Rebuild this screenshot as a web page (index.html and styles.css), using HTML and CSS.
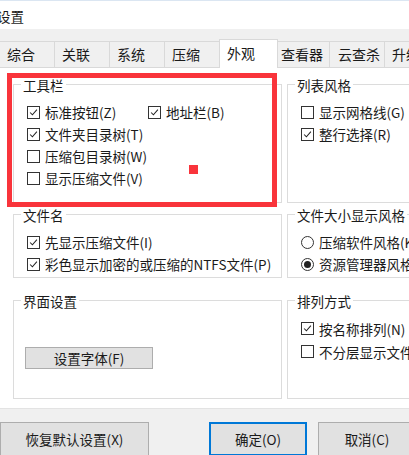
FILE: index.html
```html
<!DOCTYPE html>
<html lang="zh-CN">
<head>
    <meta charset="UTF-8">
    <title>设置</title>
    <link rel="stylesheet" href="styles.css">
</head>
<body>
    <div class="window">
        <div class="titlebar">设置</div>

        <div class="tabstrip">
            <div class="tab">综合</div>
            <div class="tab">关联</div>
            <div class="tab">系统</div>
            <div class="tab">压缩</div>
            <div class="tab active">外观</div>
            <div class="tab tab-3 tab-a">查看器</div>
            <div class="tab tab-3 tab-b">云查杀</div>
            <div class="tab">升级</div>
        </div>

        <div class="panel">
            <div class="band band-1">
                <div class="group">
                    <div class="group-title">工具栏</div>
                    <div class="rows">
                        <div class="row">
                            <div class="opt opt-wide"><span class="box on"><svg viewBox="0 0 13 13"><polyline points="2.5,6.5 5.2,9.2 10.5,3.2"/></svg></span>标准按钮(Z)</div>
                            <div class="opt"><span class="box on"><svg viewBox="0 0 13 13"><polyline points="2.5,6.5 5.2,9.2 10.5,3.2"/></svg></span>地址栏(B)</div>
                        </div>
                        <div class="row">
                            <div class="opt"><span class="box on"><svg viewBox="0 0 13 13"><polyline points="2.5,6.5 5.2,9.2 10.5,3.2"/></svg></span>文件夹目录树(T)</div>
                        </div>
                        <div class="row">
                            <div class="opt"><span class="box"></span>压缩包目录树(W)</div>
                        </div>
                        <div class="row">
                            <div class="opt"><span class="box"></span>显示压缩文件(V)</div>
                        </div>
                    </div>
                </div>
                <div class="group">
                    <div class="group-title">列表风格</div>
                    <div class="rows">
                        <div class="row">
                            <div class="opt"><span class="box"></span>显示网格线(G)</div>
                        </div>
                        <div class="row">
                            <div class="opt"><span class="box on"><svg viewBox="0 0 13 13"><polyline points="2.5,6.5 5.2,9.2 10.5,3.2"/></svg></span>整行选择(R)</div>
                        </div>
                    </div>
                </div>
            </div>

            <div class="band band-2">
                <div class="group">
                    <div class="group-title">文件名</div>
                    <div class="rows">
                        <div class="row">
                            <div class="opt"><span class="box on"><svg viewBox="0 0 13 13"><polyline points="2.5,6.5 5.2,9.2 10.5,3.2"/></svg></span>先显示压缩文件(I)</div>
                        </div>
                        <div class="row">
                            <div class="opt"><span class="box on"><svg viewBox="0 0 13 13"><polyline points="2.5,6.5 5.2,9.2 10.5,3.2"/></svg></span>彩色显示加密的或压缩的NTFS文件(P)</div>
                        </div>
                    </div>
                </div>
                <div class="group">
                    <div class="group-title">文件大小显示风格</div>
                    <div class="rows">
                        <div class="row">
                            <div class="opt"><span class="radio"></span>压缩软件风格(K)</div>
                        </div>
                        <div class="row">
                            <div class="opt"><span class="radio on"></span>资源管理器风格(E)</div>
                        </div>
                    </div>
                </div>
            </div>

            <div class="band band-3">
                <div class="group">
                    <div class="group-title">界面设置</div>
                    <button class="btn font-btn">设置字体(F)</button>
                </div>
                <div class="group">
                    <div class="group-title">排列方式</div>
                    <div class="rows rows-loose">
                        <div class="row">
                            <div class="opt"><span class="box on"><svg viewBox="0 0 13 13"><polyline points="2.5,6.5 5.2,9.2 10.5,3.2"/></svg></span>按名称排列(N)</div>
                        </div>
                        <div class="row">
                            <div class="opt"><span class="box"></span>不分层显示文件(L)</div>
                        </div>
                    </div>
                </div>
            </div>
        </div>

        <div class="footer">
            <button class="btn btn-reset">恢复默认设置(X)</button>
            <button class="btn btn-ok">确定(O)</button>
            <button class="btn btn-cancel">取消(C)</button>
        </div>

        <!-- red annotation drawn over the screenshot -->
        <div class="mark-box"></div>
        <div class="mark-dot"></div>
    </div>
</body>
</html>
```

FILE: styles.css
```css
* {
    box-sizing: border-box;
}

body {
    margin: 0;
    width: 409px;
    height: 455px;
    overflow: hidden;
    background: #f0f0f0;
    font-family: "Noto Sans CJK SC", "Noto Sans", sans-serif;
    font-size: 13.5px;
    color: #1a1a1a;
}

.window {
    position: relative;
    width: 409px;
    height: 455px;
    overflow: hidden;
}

.titlebar {
    height: 29px;
    line-height: 30px;
    background: #fff;
    border-top: 1px solid #dbe6f2;
    text-indent: -3px;
}

/* tabs */
.tabstrip {
    display: flex;
    align-items: flex-end;
    height: 38px;
    white-space: nowrap;
}

.tab {
    flex: none;
    width: 55px;
    height: 26px;
    line-height: 25px;
    padding-left: 7px;
    font-size: 14px;
    background: #f0f0f0;
    border-top: 1px solid #d9d9d9;
    border-right: 1px solid #d9d9d9;
}

.tab.active {
    position: relative;
    z-index: 1;
    width: 59px;
    height: 29px;
    line-height: 27px;
    margin-left: -1px;
    margin-right: -1px;
    margin-bottom: -1px;
    background: #fff;
    border-left: 1px solid #d9d9d9;
}

.tab-a {
    width: 53px;
    padding-left: 4px;
}

.tab-b {
    padding-left: 8px;
}

/* content panel */
.panel {
    height: 342px;
    background: #fff;
    border-top: 1px solid #d9d9d9;
    border-bottom: 1px solid #e3e3e3;
    padding: 16px 0 0 13px;
}

.band {
    display: grid;
    grid-template-columns: 269px 140px;
    column-gap: 5px;
}

.band-1 {
    height: 119px;
}

.band-2 {
    height: 64px;
    margin-top: 11px;
}

.band-3 {
    height: 99px;
    margin-top: 22px;
}

.group {
    border: 1px solid #dcdcdc;
    white-space: nowrap;
}

.group-title {
    display: block;
    width: max-content;
    height: 16px;
    line-height: 16px;
    margin: -8px 0 0 7px;
    padding: 0 2px;
    background: #fff;
}

.rows {
    margin-top: 8px;
    padding-left: 13px;
}

.row {
    display: flex;
    height: 22px;
    align-items: center;
}

.rows-loose .row {
    height: 23px;
}

.opt {
    display: flex;
    align-items: center;
    gap: 5px;
}

.opt-wide {
    width: 121px;
}

.box {
    flex: none;
    width: 13px;
    height: 13px;
    border: 1px solid #333;
    background: #fff;
}

.box svg {
    display: block;
    width: 11px;
    height: 11px;
}

.box polyline {
    fill: none;
    stroke: #222;
    stroke-width: 1.2;
}

.radio {
    flex: none;
    width: 13px;
    height: 13px;
    border: 1px solid #333;
    border-radius: 50%;
    background: #fff;
    display: flex;
    align-items: center;
    justify-content: center;
}

.radio.on::after {
    content: "";
    width: 7px;
    height: 7px;
    border-radius: 50%;
    background: #222;
}

/* buttons */
.btn {
    font-family: inherit;
    font-size: 13.5px;
    color: #1a1a1a;
    background: #e1e1e1;
    border: 1px solid #adadad;
    padding: 0;
    white-space: nowrap;
}

.font-btn {
    display: block;
    width: 128px;
    height: 22px;
    line-height: 20px;
    margin: 38px 0 0 11px;
}

.footer {
    display: flex;
    padding-top: 13px;
}

.footer .btn {
    flex: none;
    height: 34px;
}

.btn-reset {
    width: 149px;
    margin-right: 60px;
}

.btn-ok {
    width: 98px;
    margin-right: 11px;
    border: 2px solid #0078d7;
}

.btn-cancel {
    width: 98px;
}

/* annotation */
.mark-box {
    position: absolute;
    left: 7px;
    top: 73px;
    width: 270px;
    height: 134px;
    border: 5px solid #f9343b;
}

.mark-dot {
    position: absolute;
    left: 189px;
    top: 165px;
    width: 9px;
    height: 9px;
    background: #f9343b;
}
```
